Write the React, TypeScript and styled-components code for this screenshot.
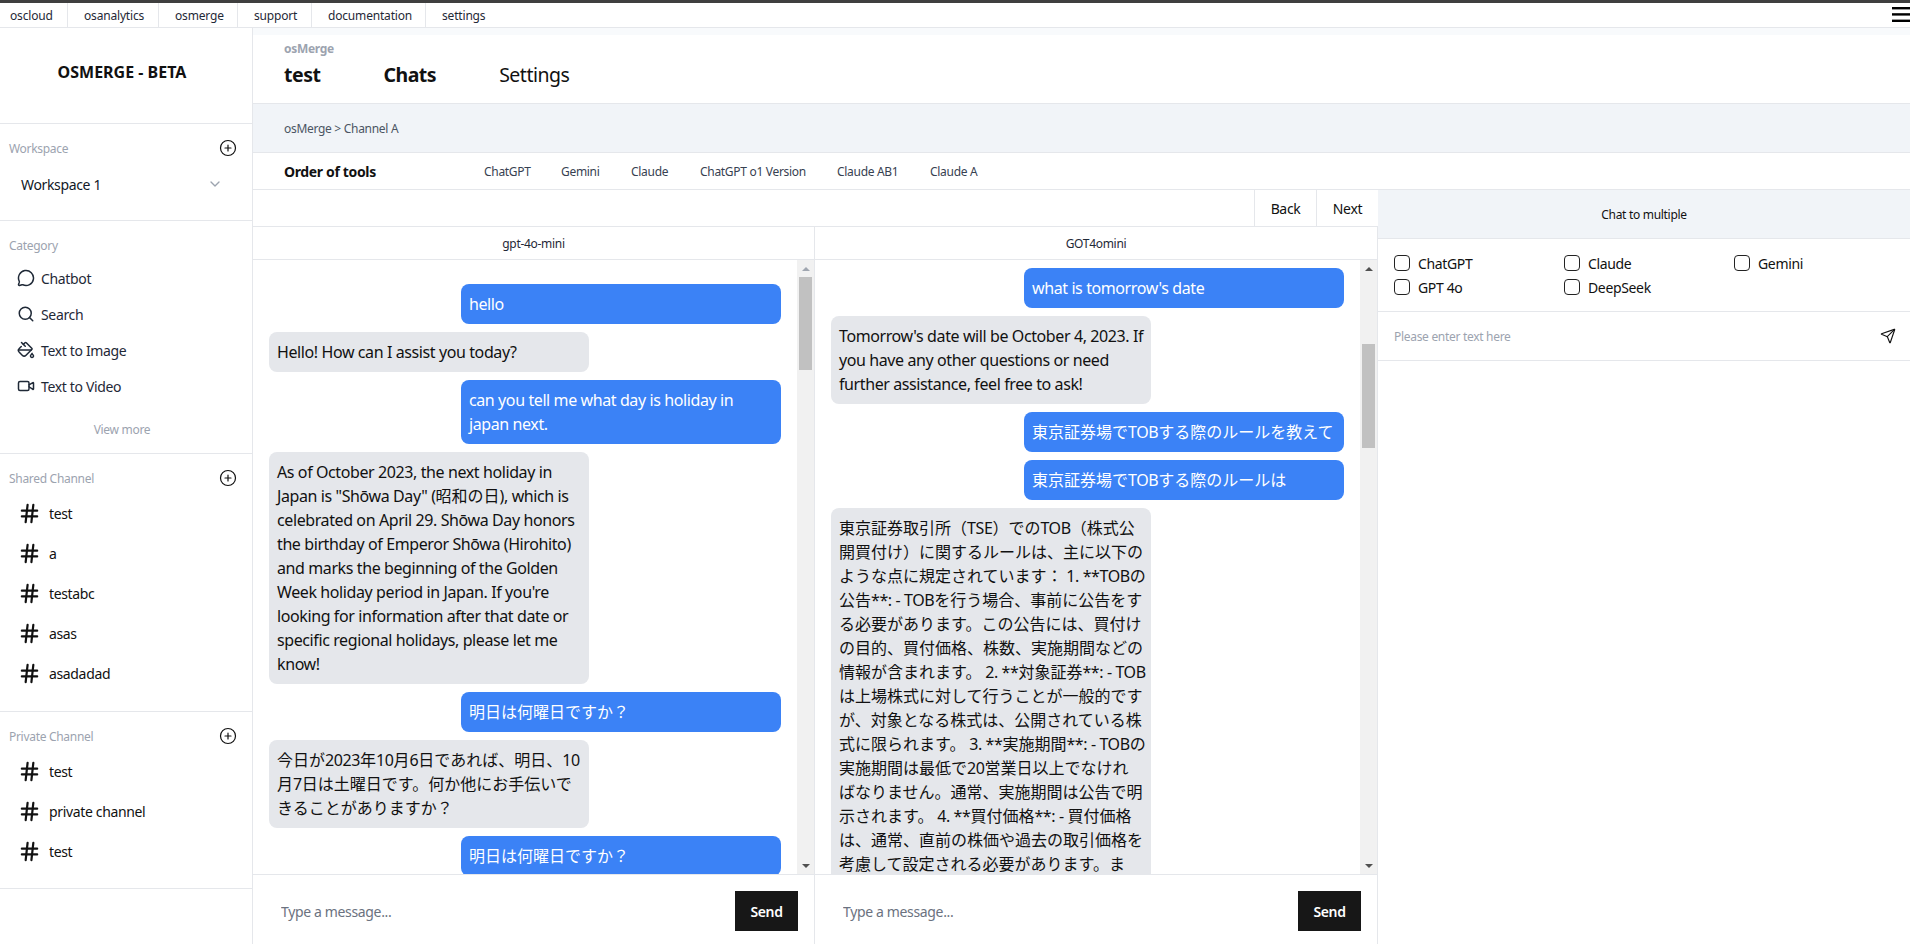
import React from "react";
import styled, { createGlobalStyle } from "styled-components";
import { ChevronDown, CirclePlus, Hash, MessageCircle, PaintBucket, Search, Send, Video } from "lucide-react";

const FONT = `"Noto Sans", "Noto Sans CJK JP", sans-serif`;

const Global = createGlobalStyle`
  html, body { margin: 0; padding: 0; background: #fff; }
  * { box-sizing: border-box; letter-spacing: -0.025em; }
  body { font-family: ${FONT}; color: #111; }
  input, button { font-family: inherit; }
`;

const Page = styled.div`
  width: 1910px;
  height: 944px;
  display: flex;
  flex-direction: column;
  overflow: hidden;
  border-top: 3px solid #3f3f3f;
`;

const TopNav = styled.nav`
  height: 25px;
  flex: none;
  display: flex;
  align-items: center;
  justify-content: space-between;
  border-bottom: 1px solid #e5e7eb;
`;
const TopTabs = styled.div`
  display: flex;
  height: 100%;
`;
const TopTab = styled.a<{ $w: number; $first?: boolean; $last?: boolean }>`
  width: ${(p) => p.$w}px;
  flex: none;
  padding-left: ${(p) => (p.$first ? 10 : 16)}px;
  display: flex;
  align-items: center;
  white-space: nowrap;
  font-size: 12px;
  letter-spacing: -0.015em;
  color: #1f2937;
  border-right: ${(p) => (p.$last ? "none" : "1px solid #e5e7eb")};
`;
const Burger = styled.svg`
  display: block;
  width: 18px;
  height: 18px;
  margin-top: -3px;
`;

const Body = styled.div`
  flex: 1;
  display: flex;
  min-height: 0;
`;

const Sidebar = styled.aside`
  width: 253px;
  flex: none;
  border-right: 1px solid #e5e7eb;
`;
const Brand = styled.div`
  height: 96px;
  padding: 33px 8px 0 0;
  text-align: center;
  font-size: 16px;
  line-height: 22px;
  font-weight: 700;
  letter-spacing: 0;
  border-bottom: 1px solid #e5e7eb;
`;
const Section = styled.section<{ $h: number }>`
  height: ${(p) => p.$h}px;
  padding-top: 12px;
  border-bottom: 1px solid #e5e7eb;
`;
const SectionHead = styled.div`
  height: 24px;
  display: flex;
  align-items: center;
  justify-content: space-between;
  padding: 0 15px 0 9px;
  font-size: 12px;
  color: #9ca3af;
  svg { color: #111; }
`;
const SelectRow = styled.div`
  height: 36px;
  margin-top: 6px;
  padding: 0 29px 0 21px;
  display: flex;
  align-items: center;
  justify-content: space-between;
  font-size: 14px;
  color: #111827;
  svg { color: #9ca3af; }
`;
const CategoryList = styled.div`
  margin-top: 3px;
`;
const CategoryRow = styled.div`
  height: 36px;
  padding-left: 17px;
  display: flex;
  align-items: center;
  gap: 6px;
  font-size: 14px;
  color: #1f2937;
`;
const ViewMore = styled.div`
  margin-top: 16px;
  padding-right: 8px;
  text-align: center;
  font-size: 12px;
  line-height: 20px;
  color: #9ca3af;
`;
const ChannelList = styled.div`
  margin-top: 3px;
`;
const ChannelRow = styled.div`
  height: 40px;
  padding-left: 18px;
  display: flex;
  align-items: center;
  gap: 8px;
  font-size: 14px;
  color: #111;
`;

const Main = styled.main`
  flex: 1;
  min-width: 0;
  display: flex;
  flex-direction: column;
`;
const PaleStrip = styled.div`
  height: 7px;
  flex: none;
  background: #f8fafc;
`;
const Header = styled.header`
  height: 68px;
  flex: none;
  padding: 6px 0 0 31px;
`;
const HeaderLabel = styled.div`
  font-size: 12px;
  line-height: 16px;
  font-weight: 700;
  color: #9ca3af;
`;
const HeaderTabs = styled.div`
  margin-top: 4px;
  display: flex;
  gap: 63px;
`;
const HeaderTab = styled.div<{ $active?: boolean }>`
  font-size: 19.5px;
  line-height: 28px;
  font-weight: ${(p) => (p.$active ? 700 : 400)};
  color: #111;
`;
const Breadcrumb = styled.div`
  height: 50px;
  flex: none;
  padding-left: 31px;
  display: flex;
  align-items: center;
  font-size: 12px;
  color: #4b5563;
  background: #f1f4f8;
  border-top: 1px solid #e5e7eb;
  border-bottom: 1px solid #e5e7eb;
`;
const OrderBar = styled.div`
  height: 37px;
  flex: none;
  display: flex;
  align-items: center;
  padding-left: 31px;
  border-bottom: 1px solid #e5e7eb;
`;
const OrderTitle = styled.div`
  width: 200px;
  font-size: 14px;
  font-weight: 700;
`;
const OrderTool = styled.div<{ $w: number }>`
  width: ${(p) => p.$w}px;
  font-size: 12px;
  white-space: nowrap;
  color: #374151;
`;

const Workspace = styled.div`
  flex: 1;
  min-height: 0;
  display: flex;
`;
const Board = styled.div`
  width: 1125px;
  flex: none;
  display: flex;
  flex-direction: column;
`;
const BackNext = styled.div`
  height: 36px;
  flex: none;
  display: flex;
  justify-content: flex-end;
`;
const NavButton = styled.div`
  width: 62px;
  display: flex;
  align-items: center;
  justify-content: center;
  font-size: 14px;
  color: #111;
  border-left: 1px solid #e5e7eb;
`;
const Columns = styled.div`
  flex: 1;
  min-height: 0;
  display: flex;
`;
const Column = styled.div`
  width: 562px;
  flex: none;
  display: flex;
  flex-direction: column;
  border-right: 1px solid #e5e7eb;
  &:last-child { width: 563px; }
`;
const ColumnHead = styled.div`
  height: 34px;
  flex: none;
  display: flex;
  align-items: center;
  justify-content: center;
  font-size: 12px;
  color: #1f2937;
  border-top: 1px solid #e5e7eb;
  border-bottom: 1px solid #e5e7eb;
`;
const ScrollArea = styled.div`
  flex: 1;
  min-height: 0;
  display: flex;
`;
const Messages = styled.div<{ $top: number }>`
  flex: 1;
  min-width: 0;
  overflow: hidden;
  padding: ${(p) => p.$top}px 16px 0;
  display: flex;
  flex-direction: column;
  gap: 8px;
`;
const Bubble = styled.div<{ $mine?: boolean }>`
  width: 320px;
  flex: none;
  align-self: ${(p) => (p.$mine ? "flex-end" : "flex-start")};
  padding: 8px;
  border-radius: 8px;
  font-size: 16px;
  line-height: 24px;
  letter-spacing: 0;
  white-space: nowrap;
  background: ${(p) => (p.$mine ? "#3b82f6" : "#e5e7eb")};
  color: ${(p) => (p.$mine ? "#fff" : "#111")};
  div { letter-spacing: 0; }
`;
const Latin = styled.span`
  letter-spacing: -0.025em;
`;
const Scrollbar = styled.div`
  width: 17px;
  flex: none;
  display: flex;
  flex-direction: column;
  background: #f1f1f1;
`;
const ScrollButton = styled.div<{ $dir: "up" | "down"; $color: string }>`
  height: 17px;
  flex: none;
  display: flex;
  align-items: center;
  justify-content: center;
  &::before {
    content: "";
    border-left: 4px solid transparent;
    border-right: 4px solid transparent;
    ${(p) => (p.$dir === "up" ? `border-bottom: 4px solid ${p.$color};` : `border-top: 4px solid ${p.$color};`)}
  }
`;
const ScrollTrack = styled.div`
  flex: 1;
  min-height: 0;
`;
const ScrollThumb = styled.div<{ $top: number; $h: number }>`
  width: 13px;
  height: ${(p) => p.$h}px;
  margin: ${(p) => p.$top}px 0 0 2px;
  background: #c1c1c1;
`;
const Composer = styled.form`
  height: 70px;
  flex: none;
  display: flex;
  padding: 16px;
  border-top: 1px solid #e5e7eb;
`;
const ComposerInput = styled.input`
  flex: 1;
  min-width: 0;
  height: 40px;
  padding: 0 12px;
  border: none;
  outline: none;
  font-size: 14px;
  background: transparent;
  &::placeholder { color: #6b7280; opacity: 1; }
`;
const SendButton = styled.button`
  width: 63px;
  height: 40px;
  flex: none;
  border: none;
  background: #171717;
  color: #fff;
  font-size: 14px;
  font-weight: 600;
`;

const Panel = styled.aside`
  flex: 1;
  min-width: 0;
  display: flex;
  flex-direction: column;
`;
const PanelHead = styled.div`
  height: 49px;
  flex: none;
  padding-top: 13px;
  text-align: center;
  font-size: 12px;
  line-height: 24px;
  background: #f1f4f8;
  border-bottom: 1px solid #e5e7eb;
`;
const CheckGrid = styled.div`
  height: 73px;
  flex: none;
  padding: 12px 16px 0;
  display: grid;
  grid-template-columns: repeat(3, 170px);
  grid-auto-rows: 24px;
  border-bottom: 1px solid #e5e7eb;
`;
const CheckItem = styled.label`
  display: flex;
  align-items: center;
  gap: 8px;
  font-size: 14px;
  color: #111;
`;
const CheckBox = styled.input.attrs({ type: "checkbox" })`
  appearance: none;
  width: 16px;
  height: 16px;
  margin: 0;
  border: 1px solid #222;
  border-radius: 4px;
  background: #fff;
`;
const PanelInputRow = styled.div`
  height: 49px;
  flex: none;
  display: flex;
  align-items: center;
  padding: 0 14px 0 16px;
  border-bottom: 1px solid #e5e7eb;
`;
const PanelInput = styled.input`
  flex: 1;
  min-width: 0;
  padding: 0;
  border: none;
  outline: none;
  font-size: 12px;
  background: transparent;
  &::placeholder { color: #9ca3af; opacity: 1; }
`;

const topTabs: [string, number][] = [
  ["oscloud", 68],
  ["osanalytics", 91],
  ["osmerge", 79],
  ["support", 74],
  ["documentation", 114],
  ["settings", 80],
];
const categories = [
  { label: "Chatbot", Icon: MessageCircle },
  { label: "Search", Icon: Search },
  { label: "Text to Image", Icon: PaintBucket },
  { label: "Text to Video", Icon: Video },
];
const tools: [string, number][] = [
  ["ChatGPT", 77],
  ["Gemini", 70],
  ["Claude", 69],
  ["ChatGPT o1 Version", 137],
  ["Claude AB1", 93],
  ["Claude A", 80],
];

type Msg = { mine?: boolean; lines: string[] };

const leftMessages: Msg[] = [
  { mine: true, lines: ["hello"] },
  { lines: ["Hello! How can I assist you today?"] },
  { mine: true, lines: ["can you tell me what day is holiday in", "japan next."] },
  {
    lines: [
      "As of October 2023, the next holiday in",
      'Japan is "Shōwa Day" (昭和の日), which is',
      "celebrated on April 29. Shōwa Day honors",
      "the birthday of Emperor Shōwa (Hirohito)",
      "and marks the beginning of the Golden",
      "Week holiday period in Japan. If you're",
      "looking for information after that date or",
      "specific regional holidays, please let me",
      "know!",
    ],
  },
  { mine: true, lines: ["明日は何曜日ですか？"] },
  { lines: ["今日が2023年10月6日であれば、明日、10", "月7日は土曜日です。何か他にお手伝いで", "きることがありますか？"] },
  { mine: true, lines: ["明日は何曜日ですか？"] },
];
const rightMessages: Msg[] = [
  { mine: true, lines: ["what is tomorrow's date"] },
  { lines: ["Tomorrow's date will be October 4, 2023. If", "you have any other questions or need", "further assistance, feel free to ask!"] },
  { mine: true, lines: ["東京証券場でTOBする際のルールを教えて"] },
  { mine: true, lines: ["東京証券場でTOBする際のルールは"] },
  {
    lines: [
      "東京証券取引所（TSE）でのTOB（株式公",
      "開買付け）に関するルールは、主に以下の",
      "ような点に規定されています： 1. **TOBの",
      "公告**: - TOBを行う場合、事前に公告をす",
      "る必要があります。この公告には、買付け",
      "の目的、買付価格、株数、実施期間などの",
      "情報が含まれます。 2. **対象証券**: - TOB",
      "は上場株式に対して行うことが一般的です",
      "が、対象となる株式は、公開されている株",
      "式に限られます。 3. **実施期間**: - TOBの",
      "実施期間は最低で20営業日以上でなけれ",
      "ばなりません。通常、実施期間は公告で明",
      "示されます。 4. **買付価格**: - 買付価格",
      "は、通常、直前の株価や過去の取引価格を",
      "考慮して設定される必要があります。ま",
    ],
  },
];

function MessageLine({ text }: { text: string }) {
  const parts = text.split(/([\u0000-\u007Fō]+)/).filter(Boolean);
  return (
    <div>
      {parts.map((part, i) => (/[\u0000-\u007Fō]/.test(part[0]) ? <Latin key={i}>{part}</Latin> : part))}
    </div>
  );
}

function ChatColumn(props: {
  title: string;
  messages: Msg[];
  top: number;
  thumbTop: number;
  thumbHeight: number;
  upColor: string;
}) {
  return (
    <Column>
      <ColumnHead>{props.title}</ColumnHead>
      <ScrollArea>
        <Messages $top={props.top}>
          {props.messages.map((m, i) => (
            <Bubble key={i} $mine={m.mine}>
              {m.lines.map((l, j) => (
                <MessageLine key={j} text={l} />
              ))}
            </Bubble>
          ))}
        </Messages>
        <Scrollbar>
          <ScrollButton $dir="up" $color={props.upColor} />
          <ScrollTrack>
            <ScrollThumb $top={props.thumbTop} $h={props.thumbHeight} />
          </ScrollTrack>
          <ScrollButton $dir="down" $color="#505050" />
        </Scrollbar>
      </ScrollArea>
      <Composer onSubmit={(e) => e.preventDefault()}>
        <ComposerInput placeholder="Type a message..." />
        <SendButton>Send</SendButton>
      </Composer>
    </Column>
  );
}

function ChannelSection(props: { title: string; names: string[]; height: number }) {
  return (
    <Section $h={props.height}>
      <SectionHead>
        {props.title}
        <CirclePlus size={18} strokeWidth={1.6} />
      </SectionHead>
      <ChannelList>
        {props.names.map((n, i) => (
          <ChannelRow key={i}>
            <Hash size={23} strokeWidth={2.3} />
            {n}
          </ChannelRow>
        ))}
      </ChannelList>
    </Section>
  );
}

export default function App() {
  return (
    <Page>
      <Global />
      <TopNav>
        <TopTabs>
          {topTabs.map(([t, w], i) => (
            <TopTab key={t} $w={w} $first={i === 0} $last={i === topTabs.length - 1}>
              {t}
            </TopTab>
          ))}
        </TopTabs>
        <Burger viewBox="0 0 18 18">
          <rect x="0" y="2" width="18" height="2.4" fill="#000" />
          <rect x="0" y="8.2" width="18" height="2.4" fill="#000" />
          <rect x="0" y="14.6" width="18" height="2.4" fill="#000" />
        </Burger>
      </TopNav>
      <Body>
        <Sidebar>
          <Brand>OSMERGE - BETA</Brand>
          <Section $h={97}>
            <SectionHead>
              Workspace
              <CirclePlus size={18} strokeWidth={1.6} />
            </SectionHead>
            <SelectRow>
              Workspace 1
              <ChevronDown size={16} />
            </SelectRow>
          </Section>
          <Section $h={233}>
            <SectionHead>Category</SectionHead>
            <CategoryList>
              {categories.map(({ label, Icon }) => (
                <CategoryRow key={label}>
                  <Icon size={18} />
                  {label}
                </CategoryRow>
              ))}
            </CategoryList>
            <ViewMore>View more</ViewMore>
          </Section>
          <ChannelSection title="Shared Channel" names={["test", "a", "testabc", "asas", "asadadad"]} height={258} />
          <ChannelSection title="Private Channel" names={["test", "private channel", "test"]} height={177} />
        </Sidebar>
        <Main>
          <PaleStrip />
          <Header>
            <HeaderLabel>osMerge</HeaderLabel>
            <HeaderTabs>
              <HeaderTab $active>test</HeaderTab>
              <HeaderTab $active>Chats</HeaderTab>
              <HeaderTab>Settings</HeaderTab>
            </HeaderTabs>
          </Header>
          <Breadcrumb>osMerge &gt; Channel A</Breadcrumb>
          <OrderBar>
            <OrderTitle>Order of tools</OrderTitle>
            {tools.map(([t, w]) => (
              <OrderTool key={t} $w={w}>
                {t}
              </OrderTool>
            ))}
          </OrderBar>
          <Workspace>
            <Board>
              <BackNext>
                <NavButton>Back</NavButton>
                <NavButton>Next</NavButton>
              </BackNext>
              <Columns>
                <ChatColumn title="gpt-4o-mini" messages={leftMessages} top={24} thumbTop={0} thumbHeight={93} upColor="#a0a6b0" />
                <ChatColumn title="GOT4omini" messages={rightMessages} top={8} thumbTop={67} thumbHeight={104} upColor="#505050" />
              </Columns>
            </Board>
            <Panel>
              <PanelHead>Chat to multiple</PanelHead>
              <CheckGrid>
                {["ChatGPT", "Claude", "Gemini", "GPT 4o", "DeepSeek"].map((c) => (
                  <CheckItem key={c}>
                    <CheckBox />
                    {c}
                  </CheckItem>
                ))}
              </CheckGrid>
              <PanelInputRow>
                <PanelInput placeholder="Please enter text here" />
                <Send size={16} strokeWidth={1.7} />
              </PanelInputRow>
            </Panel>
          </Workspace>
        </Main>
      </Body>
    </Page>
  );
}
